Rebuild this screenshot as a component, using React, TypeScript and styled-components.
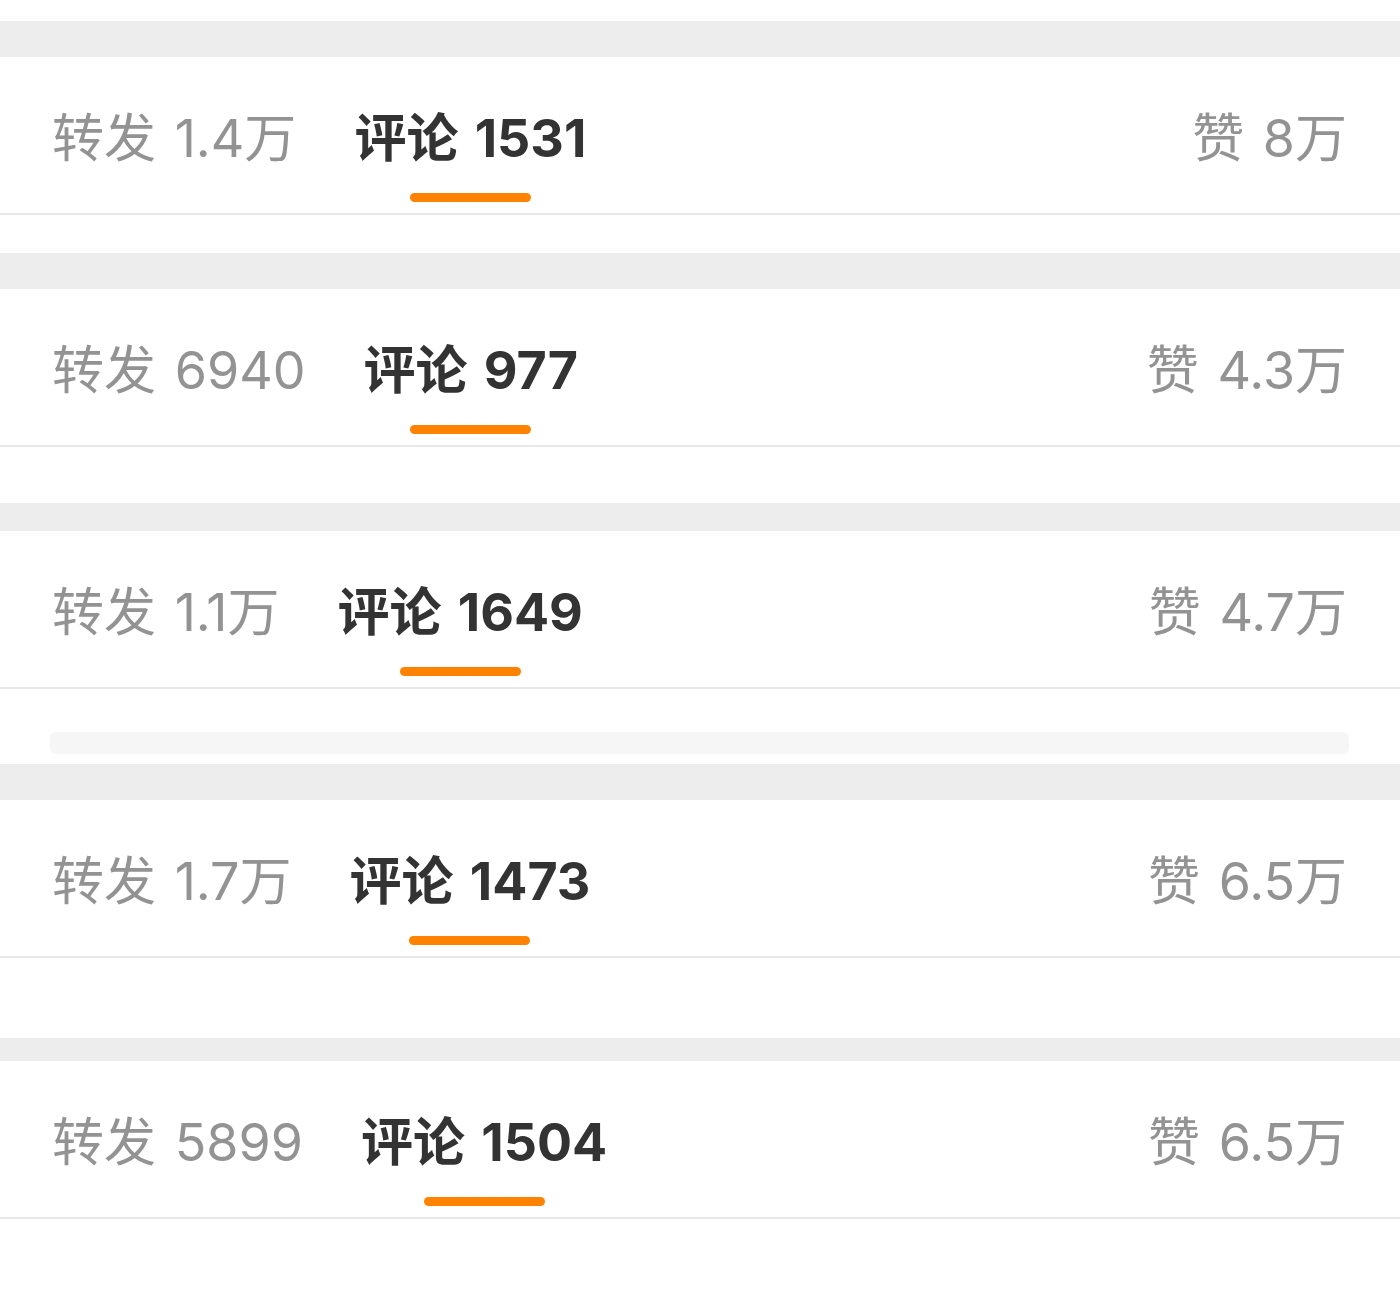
import React from "react";
import styled, { createGlobalStyle } from "styled-components";

const Global = createGlobalStyle`
  html, body { margin: 0; padding: 0; background: #ffffff; }
  body { font-family: "Inter", "Noto Sans CJK SC", sans-serif; }
`;

const Feed = styled.div`
  display: flex;
  flex-direction: column;
  width: 1400px;
  min-height: 1298px;
  padding-top: 21px;
  box-sizing: border-box;
  background: #ffffff;
`;

const Band = styled.div<{ $h: number }>`
  height: ${(p) => p.$h}px;
  background: #ededed;
`;

const Spacer = styled.div<{ $h: number }>`
  height: ${(p) => p.$h}px;
`;

const PlaceholderGap = styled.div`
  display: flex;
  flex-direction: column;
  padding: 43px 51px 10px 50px;
`;

const PlaceholderBar = styled.div`
  height: 22px;
  border-radius: 6px;
  background: #f6f6f6;
`;

const TabRow = styled.div`
  display: flex;
  align-items: flex-start;
  height: 156px;
  padding: 0 53px 0 52px;
  border-bottom: 2px solid #e8e8e8;
  box-sizing: content-box;
`;

const TabGroup = styled.div`
  display: flex;
  gap: 58px;
`;

const Tab = styled.div<{ $active?: boolean }>`
  display: flex;
  flex-direction: column;
  align-items: center;
  padding-top: 52px;
  font-size: 52px;
  line-height: 60px;
  white-space: nowrap;
  color: ${(p) => (p.$active ? "#333333" : "#939393")};
  font-weight: ${(p) => (p.$active ? 700 : 400)};
`;

const LikeTab = styled(Tab)`
  margin-left: auto;
`;

const Num = styled.span`
  margin-left: 4px;
`;

const Indicator = styled.div`
  width: 121px;
  height: 9px;
  margin-top: 24px;
  border-radius: 5px;
  background: #ff8200;
`;

type Stat = { repost: string; comment: string; like: string };

const StatsBar = ({ s }: { s: Stat }) => (
  <TabRow>
    <TabGroup>
      <Tab>
        <span>
          转发 <Num>{s.repost}</Num>
        </span>
      </Tab>
      <Tab $active>
        <span>
          评论 <Num>{s.comment}</Num>
        </span>
        <Indicator />
      </Tab>
    </TabGroup>
    <LikeTab>
      <span>
        赞 <Num>{s.like}</Num>
      </span>
    </LikeTab>
  </TabRow>
);

export default function App() {
  return (
    <>
      <Global />
      <Feed>
        <Band $h={36} />
        <StatsBar s={{ repost: "1.4万", comment: "1531", like: "8万" }} />
        <Spacer $h={38} />
        <Band $h={36} />
        <StatsBar s={{ repost: "6940", comment: "977", like: "4.3万" }} />
        <Spacer $h={56} />
        <Band $h={28} />
        <StatsBar s={{ repost: "1.1万", comment: "1649", like: "4.7万" }} />
        <PlaceholderGap>
          <PlaceholderBar />
        </PlaceholderGap>
        <Band $h={36} />
        <StatsBar s={{ repost: "1.7万", comment: "1473", like: "6.5万" }} />
        <Spacer $h={80} />
        <Band $h={23} />
        <StatsBar s={{ repost: "5899", comment: "1504", like: "6.5万" }} />
      </Feed>
    </>
  );
}
